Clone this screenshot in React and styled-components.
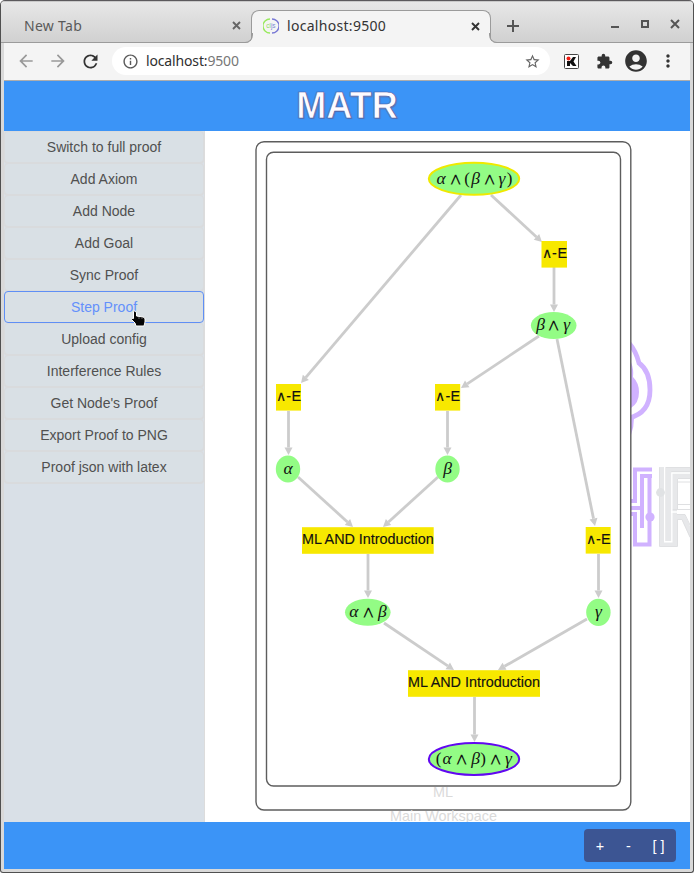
import React from 'react';
import styled, { createGlobalStyle, css } from 'styled-components';
import {
  MdArrowBack, MdArrowForward, MdRefresh, MdInfoOutline, MdStarBorder,
  MdExtension, MdAccountCircle, MdMoreVert,
} from 'react-icons/md';

const SANS = '"Liberation Sans", Arial, sans-serif';
const CHROME = '"Noto Sans", "Open Sans", sans-serif';

const GlobalStyle = createGlobalStyle`
  * { box-sizing: border-box; }
  body { margin: 0; background: #fff; overflow: hidden; }
`;

const Window = styled.div`
  width: 694px;
  height: 873px;
  display: flex;
  flex-direction: column;
  border: 1px solid #505050;
  border-top-color: #5b595c;
  border-radius: 5px 5px 3px 3px;
  background: #d9d9d9;
  overflow: hidden;
  font-family: ${SANS};
`;

const TabStrip = styled.div`
  flex: none;
  height: 42px;
  display: flex;
  align-items: flex-end;
  padding: 0 3px;
  border-top: 1px solid #c9c9c9;
  background: linear-gradient(#e7e7e7, #d0d0d0);
  box-shadow: inset 0 -1px #9b9b9b;
`;

const Tab = styled.div`
  position: relative;
  flex: none;
  height: 33px;
  width: ${(p) => (p.$active ? 240 : 247)}px;
  display: flex;
  align-items: center;
  padding: ${(p) => (p.$active ? '0 7px 2px 11px' : '0 7px 2px 20px')};
  font: 14px/20px ${CHROME};
  color: #5a5a5a;
  ${(p) => p.$active && css`
    color: #333;
    background: #f4f4f4;
    border: 1px solid #9b9b9b;
    border-bottom: 0;
    border-radius: 8px 8px 0 0;
    &::before, &::after {
      content: '';
      position: absolute;
      bottom: 0;
      width: 9px;
      height: 9px;
      border: 1px solid #9b9b9b;
      clip-path: inset(0);
    }
    &::before {
      left: -9px;
      border-width: 0 1px 1px 0;
      border-radius: 0 0 8px 0;
      box-shadow: 3px 3px 0 #f4f4f4;
    }
    &::after {
      right: -9px;
      border-width: 0 0 1px 1px;
      border-radius: 0 0 0 8px;
      box-shadow: -3px 3px 0 #f4f4f4;
    }
  `}
`;

const TabTitle = styled.span`
  flex: 1;
  display: flex;
  gap: 8px;
  align-items: center;
  letter-spacing: ${(p) => p.$spacing || 0}px;
`;

const WindowControls = styled.div`
  flex: 1;
  height: 41px;
  display: flex;
  align-items: center;
`;

const NewTab = styled.span`
  width: 44px;
  display: flex;
  justify-content: center;
  padding-top: 7px;
`;

const Toolbar = styled.div`
  flex: none;
  height: 38px;
  margin: 0 3px;
  display: flex;
  align-items: center;
  padding: 0 0 1px 14px;
  background: #f4f4f4;
  border-bottom: 1px solid #adadad;
`;

const IconSlot = styled.span`
  flex: none;
  display: flex;
  justify-content: center;
  align-items: center;
  width: ${(p) => p.$w || 32}px;
  color: ${(p) => p.$color || '#333'};
  svg { flex: none; }
`;

const AddressBar = styled.div`
  flex: none;
  width: 438px;
  height: 28px;
  margin: 0 14px 0 14px;
  display: flex;
  align-items: center;
  padding: 0 9px;
  border-radius: 14px;
  background: #fff;
  font: 14px/20px ${CHROME};
  color: #2f2f2f;
`;

const Address = styled.span`
  flex: 1;
  padding-left: 7px;
  letter-spacing: -0.15px;
  span { color: #777; }
`;

const Page = styled.div`
  width: 686px;
  height: 788px;
  margin: 0 3px;
  display: grid;
  grid-template: 50px 691px 47px / 201px 485px;
`;

const Banner = styled.header`
  grid-column: 1 / -1;
  display: flex;
  align-items: center;
  justify-content: center;
  background: #3b94f7;
  h1 {
    margin: 0;
    font: bold 36px/50px ${SANS};
    color: #fdfbff;
    -webkit-text-stroke: 0.7px #4b64ac;
    text-shadow: 0 0 1px #4b64ac, 1px 1px 1px #5674b8;
  }
`;

const Sidebar = styled.nav`
  position: relative;
  display: flex;
  flex-direction: column;
  background: #d9e0e7;
  border-right: 1px solid #dcdcdc;
`;

const MenuButton = styled.button`
  height: 32px;
  padding: 0;
  border: 1px solid ${(p) => (p.$active ? '#5f8ff5' : '#d9dbdd')};
  border-radius: 4px;
  background: #d9e0e5;
  box-shadow: ${(p) => (p.$active ? 'none' : '0 1px #d9dbdd')};
  color: ${(p) => (p.$active ? '#6490fb' : '#505050')};
  font: 14px/30px ${SANS};
`;

const Pointer = styled.svg`
  position: absolute;
  left: 126px;
  top: 179px;
`;

const Footer = styled.footer`
  grid-column: 1 / -1;
  display: flex;
  align-items: center;
  justify-content: flex-end;
  padding-right: 14px;
  background: #3b94f7;
`;

const ZoomGroup = styled.div`
  display: flex;
  width: 92px;
  height: 33px;
  border-radius: 4px;
  background: #3c5593;
`;

const ZoomButton = styled.button`
  width: ${(p) => p.$w}px;
  padding: 0;
  border: 0;
  background: none;
  color: #fff;
  font: 14.4px/32px ${SANS};
`;

const Canvas = styled.svg`
  display: block;
  background: #fff;
  .edge { stroke: #ccc; stroke-width: 2.8; fill: none; }
  .rule { fill: #f7e800; }
  .goal { fill: #93fc85; }
  .frame { fill: #fff; stroke: #5d5d5d; stroke-width: 1.4; }
  .label { font: 14.4px ${SANS}; text-anchor: middle; fill: #111; stroke: #111; stroke-width: .15; }
  .group { font: 14.4px ${SANS}; text-anchor: middle; fill: #dadada; }
  .math { font: italic 17.5px "Liberation Serif", serif; text-anchor: middle; fill: #111; }
  .wedge { font: 15.5px "DejaVu Math TeX Gyre", "DejaVu Sans", serif; }
  .paren { font: 17px "Liberation Serif", serif; }
`;

const menu = [
  'Switch to full proof', 'Add Axiom', 'Add Node', 'Add Goal', 'Sync Proof', 'Step Proof',
  'Upload config', 'Interference Rules', "Get Node's Proof", 'Export Proof to PNG',
  'Proof json with latex',
];

const edges = [
  [461, 195, 301, 383], [491, 195, 542, 242], [554, 267, 554, 312],
  [539, 336, 461, 388], [557, 339, 595, 526], [288.5, 411, 288.5, 455],
  [447.5, 411, 447.5, 455], [298, 477, 353, 527], [438, 477, 383, 527],
  [368, 554, 368, 598], [598.5, 554, 598.5, 598], [384, 623, 454, 670],
  [587, 619, 498, 670], [474.5, 697, 474.5, 742],
];

const rules = [
  [541.5, 241, 25.5, '∧-E'], [276, 384, 25, '∧-E'], [435, 384, 25.2, '∧-E'],
  [585.7, 527, 25, '∧-E'], [302, 527.2, 131.7, 'ML AND Introduction'],
  [408, 670.2, 132, 'ML AND Introduction'],
];

// Each formula is a list of symbols with the offset of its centre from the node's centre.
const goals = [
  {
    x: 474, y: 178.8, rx: 45.2, ry: 16, ring: '#efe900',
    math: [['α', -33], ['∧', -18.5], ['(', -7], ['β', 1.5], ['∧', 15.5], ['γ', 28], [')', 35.5]],
  },
  { x: 553.7, y: 325.5, rx: 22.8, ry: 13.5, math: [['β', -13], ['∧', 0], ['γ', 13]] },
  { x: 288, y: 469, rx: 12.2, ry: 13.6, math: [['α', 0]] },
  { x: 447.5, y: 469, rx: 12.2, ry: 13.6, math: [['β', 0]] },
  { x: 367.8, y: 612.3, rx: 22.8, ry: 13.5, math: [['α', -14], ['∧', 0.5], ['β', 14.5]] },
  { x: 598.4, y: 612.3, rx: 12.2, ry: 13.6, math: [['γ', 0]] },
  {
    x: 474, y: 759, rx: 45.2, ry: 16, ring: '#6108f0',
    math: [['(', -35.5], ['α', -27], ['∧', -12.5], ['β', 1.5], [')', 9], ['∧', 21.5], ['γ', 34.5]],
  },
];

const symbolClass = { '∧': 'wedge', '(': 'paren', ')': 'paren' };

function Edge({ line: [x1, y1, x2, y2] }) {
  const length = Math.hypot(x2 - x1, y2 - y1);
  const ux = (x2 - x1) / length;
  const uy = (y2 - y1) / length;
  const bx = x2 - ux * 7.5;
  const by = y2 - uy * 7.5;
  return (
    <g>
      <line className="edge" x1={x1} y1={y1} x2={bx} y2={by} />
      <polygon
        fill="#ccc"
        points={`${x2},${y2} ${bx - uy * 4},${by + ux * 4} ${bx + uy * 4},${by - ux * 4}`}
      />
    </g>
  );
}

function Watermark() {
  return (
    <g fill="none">
      <g stroke="#d0b2ff">
        <path strokeWidth="4.8" d="M629 343 Q636 351 639 363 Q650 371 650 390 Q650 413 629 418" />
        <path fill="#d0b2ff" stroke="none" d="M631 362 Q634 370 633 377 Q639 383 639 392 Q639 403 631 408 Z M631 417 L634 418 Q634 427 631 435 Z" />
        <path strokeWidth="4" d="M652 469.5 H635 V501 H629 M652 476 H642 V528 M630 508 H642 M649.5 474 V544.5 H635 V514 H629" />
        <circle cx="650" cy="517" r="4.6" fill="#d0b2ff" stroke="none" />
      </g>
      <g stroke="#dfe0e2">
        <path fill="#e7e8ea" stroke="none" d="M659 467 H664 V541 H660 V546 H678 V520 H682 L690 538 V526 L685 515 H677 V478 H690 V467 H665 V541 H659 Z" />
        <path strokeWidth="1" d="M659.5 467.5 V546.5 H677.5 V519.5 H682 L690 537 M665.5 541 V467.5 H690 M671.5 541 V471.5 H690 M677.5 509 V478.5 H690 M677.5 504.5 H690 M671 509.5 H690 M677 514.5 H685 L690 525 M678 482 H690" />
        <path stroke="#fff" strokeWidth="1.4" d="M664.7 467 V541.7 H671.8 V473 H690 M671 512 H690" />
        <circle cx="660.5" cy="492.5" r="4.4" fill="#e0e2e4" stroke="none" />
      </g>
    </g>
  );
}

function ProofGraph() {
  return (
    <Canvas width="485" height="691" viewBox="205 131 485 691">
      <Watermark />
      <rect className="frame" x="256" y="141.7" width="374.8" height="668.3" rx="8" />
      <rect className="frame" x="266.5" y="152.2" width="354" height="633.8" rx="7" />
      <text className="group" x="443" y="797">ML</text>
      <text className="group" x="443.5" y="821">Main Workspace</text>
      {edges.map((line) => <Edge key={line.join()} line={line} />)}
      {rules.map(([x, y, w, text]) => (
        <g key={`${x}-${y}`}>
          <rect className="rule" x={x} y={y} width={w} height="26.6" />
          <text className="label" x={x + w / 2} y={y + 17} textLength={w}>{text}</text>
        </g>
      ))}
      {goals.map((g) => (
        <g key={`${g.x}-${g.y}`}>
          <ellipse className="goal" cx={g.x} cy={g.y} rx={g.rx} ry={g.ry} stroke={g.ring} strokeWidth={g.ring ? 2 : 0} />
          <text className="math">
            {g.math.map(([symbol, dx]) => (
              <tspan key={dx} className={symbolClass[symbol]} x={g.x + dx} y={g.y + 4.8}>{symbol}</tspan>
            ))}
          </text>
        </g>
      ))}
    </Canvas>
  );
}

function CloseMark({ color = '#555' }) {
  return (
    <svg width="9" height="9" viewBox="0 0 9 9">
      <path d="M1 1 L8 8 M8 1 L1 8" stroke={color} strokeWidth="1.9" />
    </svg>
  );
}

export default function App() {
  return (
    <>
      <GlobalStyle />
      <Window>
        <TabStrip>
          <Tab>
            <TabTitle $spacing={0.3}>New Tab</TabTitle>
            <IconSlot $w={16}><CloseMark color="#666" /></IconSlot>
          </Tab>
          <Tab $active>
            <TabTitle $spacing={0.3}>
              <svg width="16" height="16" viewBox="0 0 16 16">
                <path d="M7 1 A7 7 0 0 0 7 15" fill="none" stroke="#98e95d" strokeWidth="1.3" />
                <path d="M9 1 A7 7 0 0 1 9 15" fill="none" stroke="#7878d5" strokeWidth="1.3" />
                <text x="3.2" y="10" fontFamily="Liberation Sans" fontSize="6.5" letterSpacing="0" fill="#8ddb62">cl<tspan fill="#7a88d8">js</tspan></text>
              </svg>
              localhost:9500
            </TabTitle>
            <IconSlot $w={16}><CloseMark color="#333" /></IconSlot>
          </Tab>
          <WindowControls>
            <NewTab>
              <svg width="14" height="14" viewBox="0 0 14 14"><path d="M7 1 V13 M1 7 H13" stroke="#555" strokeWidth="2" /></svg>
            </NewTab>
            <IconSlot $w={155}>
              <svg width="155" height="41" viewBox="535 2 155 41">
                <path d="M611 27 H619" stroke="#555" strokeWidth="2" />
                <rect x="642" y="21" width="6" height="6" fill="none" stroke="#555" strokeWidth="2" />
                <path d="M671 20 L679 28 M679 20 L671 28" stroke="#555" strokeWidth="2" />
              </svg>
            </IconSlot>
          </WindowControls>
        </TabStrip>
        <Toolbar>
          <IconSlot $w={16} $color="#999"><MdArrowBack size={20} /></IconSlot>
          <IconSlot $w={48} $color="#999"><MdArrowForward size={20} /></IconSlot>
          <IconSlot $w={16}><MdRefresh size={21} /></IconSlot>
          <AddressBar>
            <IconSlot $w={18} $color="#5a5a5a"><MdInfoOutline size={17} /></IconSlot>
            <Address>localhost:<span>9500</span></Address>
            <IconSlot $w={18} $color="#666"><MdStarBorder size={17} /></IconSlot>
          </AddressBar>
          <IconSlot $w={15}>
            <svg width="15" height="15" viewBox="0 0 15 15">
              <rect x=".5" y=".5" width="14" height="14" rx="1" fill="#fff" stroke="#444" />
              <path d="M3 7 H6 V12 H3 Z M6 7 L9 3 H12 L9.5 7.5 L12.5 12 H9 L6 9 Z" fill="#111" />
              <circle cx="4.5" cy="4.5" r="2" fill="#f11b12" />
            </svg>
          </IconSlot>
          <IconSlot $w={50}><MdExtension size={17} /></IconSlot>
          <IconSlot $w={14}><MdAccountCircle size={26} /></IconSlot>
          <IconSlot $w={50}><MdMoreVert size={20} /></IconSlot>
        </Toolbar>
        <Page>
          <Banner><h1>MATR</h1></Banner>
          <Sidebar>
            {menu.map((item) => (
              <MenuButton key={item} $active={item === 'Step Proof'}>{item}</MenuButton>
            ))}
            <Pointer width="17" height="17" viewBox="0 0 17 17">
              <path
                d="M4.5 1 Q6.5 1 6.5 3 V6 L13 7 Q15 7.5 15 9 V12 L14 16 H6 L5 13 L1.5 9.5 Q1 7.5 3.5 8.5 V2 Q3.5 1 4.5 1 Z"
                fill="#050505" stroke="#fff"
              />
              <path d="M9 7 V9 M12 7.5 V9" stroke="#aaa" strokeWidth=".6" />
            </Pointer>
          </Sidebar>
          <ProofGraph />
          <Footer>
            <ZoomGroup>
              <ZoomButton $w={32}>+</ZoomButton>
              <ZoomButton $w={25}>-</ZoomButton>
              <ZoomButton $w={35}>[ ]</ZoomButton>
            </ZoomGroup>
          </Footer>
        </Page>
      </Window>
    </>
  );
}
